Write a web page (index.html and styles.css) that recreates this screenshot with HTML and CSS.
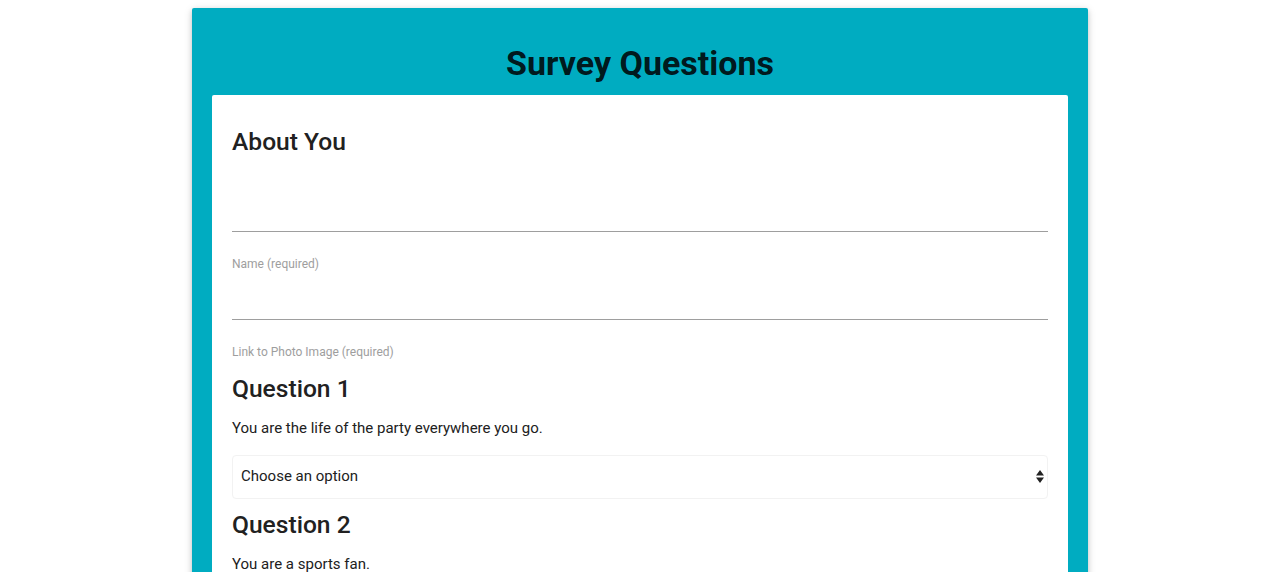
FILE: index.html
```html
<!DOCTYPE html>
<html>
<head>
<meta charset="utf-8">
<link rel="stylesheet" href="styles.css">
</head>
<body>
<div class="panel">
  <header class="panel-head">
    <h1 class="title">Survey Questions</h1>
  </header>
  <main class="card">
    <h4 class="section-title about">About You</h4>
    <div class="field-line first"></div>
    <label class="hint">Name (required)</label>
    <div class="field-line"></div>
    <label class="hint">Link to Photo Image (required)</label>

    <h4 class="section-title q1">Question 1</h4>
    <p class="question">You are the life of the party everywhere you go.</p>
    <div class="select-wrap">
      <select class="select"><option>Choose an option</option></select>
      <svg class="arrows" width="8" height="13" viewBox="0 0 8 13"><path d="M4 0 L8 5.5 L0 5.5 Z M0 7.5 L8 7.5 L4 13 Z" fill="#222"/></svg>
    </div>

    <h4 class="section-title q2">Question 2</h4>
    <p class="question">You are a sports fan.</p>
  </main>
</div>
</body>
</html>
```
FILE: styles.css
```css
html, body {
  margin: 0;
  padding: 0;
  background: #fff;
  font-family: Roboto, "Liberation Sans", sans-serif;
  color: #212121;
}
.panel {
  width: 896px;
  margin: 8px auto 0;
  background: #00acc1;
  border-radius: 2px;
  box-shadow: 0 2px 5px rgba(0,0,0,0.16), 0 2px 10px rgba(0,0,0,0.12);
  padding-bottom: 40px;
}
.panel-head {
  padding: 35px 0 12px;
  text-align: center;
}
.title {
  margin: 0;
  font-size: 34px;
  line-height: 40px;
  font-weight: 700;
  color: rgba(0,0,0,0.87);
}
.card {
  display: flex;
  flex-direction: column;
  margin: 0 20px;
  background: #fff;
  border-radius: 2px;
  padding: 20px;
}
.section-title {
  margin: 0;
  font-size: 24.6px;
  line-height: 28px;
  font-weight: 500;
  color: #212121;
}
.about { margin-top: 13px; }
.q1 { margin-top: 15px; }
.q2 { margin-top: 12px; }
.field-line {
  height: 47px;
  border-bottom: 1px solid #9e9e9e;
}
.field-line.first { margin-top: 28px; }
.hint {
  margin-top: 24px;
  font-size: 12px;
  line-height: 16px;
  color: #9e9e9e;
}
.question {
  margin: 15px 0 0;
  font-size: 15px;
  line-height: 20px;
  color: #212121;
}
.select-wrap {
  position: relative;
  margin-top: 17px;
}
.select {
  display: block;
  width: 100%;
  height: 44px;
  box-sizing: border-box;
  -webkit-appearance: none;
  appearance: none;
  border: 1px solid #f2f2f2;
  border-radius: 4px;
  background: #fff;
  padding: 0 8px 2px;
  font-family: Roboto, "Liberation Sans", sans-serif;
  font-size: 15px;
  color: #212121;
}
.arrows {
  position: absolute;
  right: 4px;
  top: 15px;
  pointer-events: none;
}
```
